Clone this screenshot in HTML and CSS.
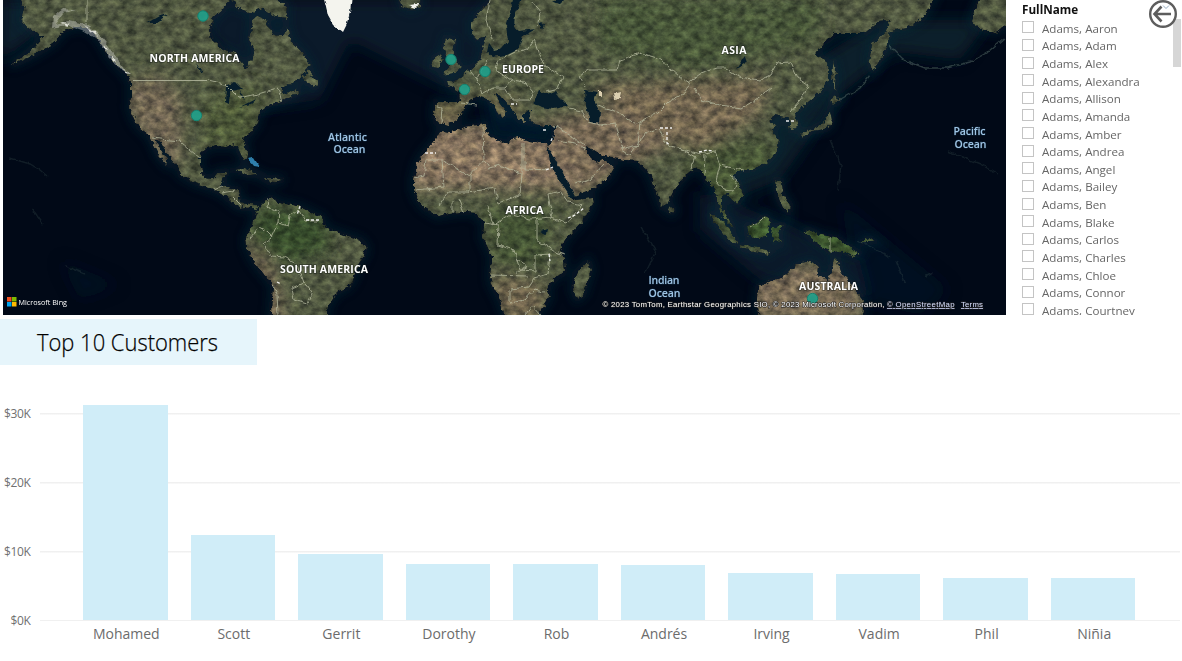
FILE: index.html
```html
<!DOCTYPE html>
<html lang="en">
<head>
<meta charset="utf-8">
<title>Customers</title>
<link rel="stylesheet" href="styles.css">
</head>
<body>
<div class="report">
  <div class="top">
    <svg class="map" viewBox="3 0 1003 315" width="1003" height="315">
      <defs>
        <filter id="land-texture" x="-10" y="-20" width="1030" height="350" filterUnits="userSpaceOnUse" color-interpolation-filters="sRGB">
          <feTurbulence type="fractalNoise" baseFrequency="0.2" numOctaves="3" seed="8" result="edge"/>
          <feDisplacementMap in="SourceGraphic" in2="edge" scale="6" xChannelSelector="R" yChannelSelector="G" result="shape"/>
          <feTurbulence type="fractalNoise" baseFrequency="0.11 0.14" numOctaves="5" seed="21"/>
          <feColorMatrix type="matrix" values="1.2 0 0 0 -0.05  1.15 0.05 0 0 -0.05  1.0 0 0.1 0 -0.02  0 0 0 0 1" result="grain"/>
          <feComposite in="shape" in2="grain" operator="arithmetic" k1="0.9" k2="0.4" k3="0" k4="0" result="mixed"/>
          <feComposite in="mixed" in2="shape" operator="in"/>
        </filter>
        <filter id="rough" x="-10" y="-20" width="1030" height="350" filterUnits="userSpaceOnUse" color-interpolation-filters="sRGB">
          <feTurbulence type="fractalNoise" baseFrequency="0.16" numOctaves="2" seed="5"/>
          <feDisplacementMap in="SourceGraphic" scale="5" xChannelSelector="R" yChannelSelector="G"/>
          <feGaussianBlur stdDeviation=".35"/>
        </filter>
        <filter id="soft8" x="-40%" y="-40%" width="180%" height="180%"><feGaussianBlur stdDeviation="8"/></filter>
        <filter id="soft4" x="-20%" y="-20%" width="140%" height="140%"><feGaussianBlur stdDeviation="5"/></filter>
        <path id="continents" d="M20 0L24 9L21 20L27 27L35 33L43 37L35 46L22 57L10 66L28 58L43 50L55 42L63 31L75 27L86 27L95 34L103 45L109 56L118 66L126 74L131 83L131 96L130 108L134 119L140 128L148 134L153 143L159 156L167 165L168 162L161 150L154 138L160 141L168 155L175 163L181 175L195 183L210 188L222 193L232 202L241 208L250 206L256 211L259 206L248 203L240 202L238 190L228 187L221 186L223 180L227 172L218 172L213 179L204 178L200 165L200 155L207 148L217 146L225 147L237 145L241 155L246 162L247 152L243 140L250 133L257 124L259 113L269 105L281 101L288 98L299 92L297 89L284 94L282 88L299 80L311 65L302 52L291 41L287 27L281 36L272 34L266 20L257 16L252 20L249 40L255 52L250 60L247 69L241 63L235 53L222 49L212 40L209 30L213 18L221 12L230 0V-12H20Z
          M232 0L240 9L252 13L262 8L274 16L286 18L287 6L278 0V-12H232ZM302 78L309 70L318 84L315 88Z
          M256 213L262 204L270 197L280 203L298 206L312 213L322 217L325 228L345 235L360 240L366 247L364 256L356 268L354 278L348 287L336 293L328 305L326 325L270 325L273 285L262 272L254 262L247 247L246 238L252 228Z
          M440 131L452 132L465 127L485 124L487 134L498 140L508 144L511 139L520 138L530 141L540 143L547 143L550 152L558 170L566 185L572 195L575 200L592 198L593 203L586 217L574 230L565 240L560 250L564 258L565 270L550 283L547 290L549 298L543 307L536 319L506 319L500 300L492 285L490 275L492 258L488 248L483 238L484 222L475 213L465 212L450 213L438 216L425 208L418 200L414 190L414 178L418 163L425 152L434 142Z
          M588 261L591 270L583 295L577 299L573 290L575 275Z
          M490 0L482 10L472 21L472 34L477 39L486 36L482 50L480 61L470 70L461 76L457 80L447 81L448 85L459 91L460 102L436 102L434 115L436 122L448 125L457 119L465 107L468 101L478 97L487 99L497 108L501 118L507 113L500 104L494 94L501 96L512 109L518 119L524 122L524 113L530 110L529 119L534 124L545 126L556 126L553 138L548 149L553 159L566 181L574 196L592 189L608 178L614 167L604 160L596 163L588 155L586 146L594 150L604 156L625 160L638 161L645 169L650 174L656 192L662 207L668 203L675 188L688 173L694 168L702 170L706 180L714 187L718 200L720 212L728 222L734 228L728 218L722 208L722 195L728 194L731 200L737 203L743 195L740 185L732 177L737 171L752 170L766 163L776 152L779 141L772 130L778 125L770 122L774 115L784 117L789 119L791 130L798 127L795 113L807 103L820 92L828 80L828 68L826 60L815 55L823 44L835 33L865 33L879 21L891 20L885 32L872 45L869 61L873 72L885 51L890 31L907 28L923 18L934 0V-12H490Z
          M980 0L974 11L971 22L982 30L996 32L1018 16V-12H980ZM446 37L455 40L453 53L461 67L455 73L443 75L450 67L446 56L443 48ZM434 58L441 54L443 60L438 68L432 67Z
          M709 213L719 218L731 230L738 244L730 242L720 229ZM739 245L754 247L771 251L768 254L744 249ZM746 226L756 224L766 215L770 223L767 237L755 238L748 234ZM776 180L781 181L782 194L790 205L789 213L781 204L777 194ZM773 227L785 225L778 231L781 243L777 239L775 244L772 236ZM804 231L811 230L820 235L835 237L848 246L860 254L854 256L843 251L830 252L820 245L811 239ZM860 242L876 242L869 238ZM669 205L675 210L671 214L668 210Z
          M761 325L757 300L758 287L770 281L782 278L790 270L800 263L812 261L818 266L817 275L828 280L832 269L834 258L838 262L842 275L852 285L860 295L864 305L863 325Z
          M834 95L841 100L833 105L830 102ZM830 110L832 121L828 128L820 130L812 131L803 137L800 133L812 129L823 123ZM833 59L836 75L835 91L832 80ZM235 170L247 168L259 174L249 175ZM263 178L275 178L284 180L270 182ZM400 0L402 6L412 10L420 6L421 -6H400Z"/>
        <clipPath id="land-clip"><use href="#continents"/></clipPath>
        <clipPath id="map-clip"><rect x="3" y="0" width="1003" height="315"/></clipPath>
      </defs>
      <g clip-path="url(#map-clip)">
        <rect x="3" y="0" width="1003" height="315" fill="#010917"/>
        <g filter="url(#soft8)" fill="#0b2635">
          <path d="M0 0H60L35 35L0 62Z" opacity=".8"/>
          <path d="M200 0H560V50L450 90L350 40L320 100L250 110L240 70L205 30Z" opacity=".6"/>
          <path d="M480 90L560 110L550 145L490 140Z" opacity=".5"/>
          <path d="M815 60L880 20H990L960 60L895 52L840 95L780 180L730 200L710 180Z" opacity=".7"/>
          <path d="M700 190L790 225L860 260L870 300L760 280L700 230Z" opacity=".6"/>
          <path d="M840 200L950 290L920 315L860 300ZM60 260L120 285L80 300Z" opacity=".3"/>
        </g>
        <use href="#continents" fill="none" stroke="#0a2a38" stroke-width="7" opacity=".6" filter="url(#soft4)"/>
        <g filter="url(#land-texture)">
          <g clip-path="url(#land-clip)">
            <rect x="-10" y="-20" width="1030" height="350" fill="#596149"/>
            <g filter="url(#soft8)">
              <path d="M120 85L160 75L182 100L180 165L160 165L130 115Z" fill="#7d715d"/>
              <path d="M205 100L260 85L250 150L205 145Z" fill="#56633f"/>
              <path d="M405 125L560 125L570 190L480 188L410 190Z" fill="#94806a"/>
              <path d="M550 120L680 95L700 130L640 160L570 200Z" fill="#857560"/>
              <path d="M590 85L770 78L760 115L700 150L640 130Z" fill="#7f715a"/>
              <path d="M260 205L325 215L330 250L285 263L250 235Z" fill="#3c5433"/>
              <path d="M245 240L270 265L285 320L265 320Z" fill="#806e5b"/>
              <path d="M485 208L550 205L545 265L495 262Z" fill="#4b5c3a"/>
              <path d="M490 275L545 285L540 320L500 320Z" fill="#7b6e57"/>
              <path d="M430 98H520V115L430 125Z" fill="#70694e"/>
              <path d="M750 265L860 265V320H750Z" fill="#857660"/>
              <path d="M690 150L780 140L760 240H700Z" fill="#4f5f3e"/>
              <path d="M800 225H870V258H810ZM740 215H790V245H740Z" fill="#415d30"/>
              <path d="M600 0H820V40L700 70L600 50Z" fill="#505e41"/>
            </g>
          </g>
        </g>
        <g fill="#071d2a" filter="url(#rough)">
          <path d="M515 -6L524 -6L515 15L514 27L519 31L536 29L523 36L518 49L506 55L493 57L487 52L489 43L494 50L502 48L508 41L506 26Z"/>
          <path d="M533 103L539 91L547 94L555 91L560 98L568 106L554 109L541 107Z"/>
          <path d="M585 90L597 92L594 101L600 112L599 124L590 122L586 106Z"/>
          <path d="M547 149L551 151L559 166L568 182L575 197L571 198L560 182L552 168Z"/>
          <path d="M226 86L235 82L242 89L230 91L229 104L225 102ZM239 90L245 100L241 98ZM240 107L257 98L250 104Z"/>
          <path d="M148 23L160 16L168 14L156 23ZM196 63L203 73L200 72ZM745 56L747 62L736 69ZM539 22L544 24L542 29ZM551 0L565 0L560 5ZM540 231L547 229L546 234Z"/>
        </g>
        <g fill="none" stroke="#b8bca1" stroke-width="1" opacity=".75" filter="url(#rough)">
          <path d="M87 -4V23M152 138L180 141L190 150L200 158M208 80L225 84L239 98L258 94L278 88L282 102M214 190L223 186M222 193L236 190M240 205L233 198"/>
          <path d="M268 198L267 207L279 211L278 223L288 226L290 216L298 209L305 221L319 221M278 223L271 238L263 244L271 256L285 257L297 265L303 283L292 288L294 300L307 304L313 295L304 282M250 238L259 227L266 231L272 237M278 315L277 295L272 283"/>
          <path d="M483 127L484 160L470 176L442 160L426 160L424 176L415 178M442 160L444 187L415 190M470 176V192L448 192L440 205M484 160L489 168L500 165L522 175V144M524 143V169L552 170M522 175L520 195L498 203L495 188L468 192M452 201V213M459 200L464 213M488 205L493 225L503 219L511 214L530 219L552 217L548 194L560 191L568 202L582 205L567 223L550 218M537 220L537 240L555 252L565 255M485 223L499 225L498 245L514 250L520 270L535 271L535 255L550 254L548 274L535 278L529 287L510 289L510 303L525 300L534 290L544 292M491 275L528 276M515 258L528 266L515 274M525 315L532 306L540 315"/>
          <path d="M437 106L442 107L441 123M460 103L477 105M470 71L477 79L487 60M477 79L482 94L493 88L505 88L512 80L506 76L495 70L497 61L514 52L528 49L534 40L539 55L545 66L563 77L558 88L546 91M505 88L513 100L530 100L533 91L525 82L512 80M490 0L486 20L493 42M532 2L541 13L538 27M585 87L580 76L588 70L617 70L620 60L641 53L660 59L680 77L690 83L685 93L668 102L658 112L635 124L620 113L598 105M688 83L700 74L717 68L726 68L740 77L760 80L770 75L777 63L790 62L797 78L808 85L804 95L790 112M694 88L702 100L720 105L742 108L755 100L772 88M569 108L582 111L588 122L600 125L616 123L622 150L630 155L646 133L659 128L667 145L700 154L715 151L720 165L733 168L743 170M554 125L585 145M557 140L575 143L585 149M575 184L590 180L603 165M620 149L638 145L640 122M680 148L695 157L691 168M705 155L704 175M720 165L716 181L724 190L734 191L737 181L730 175M750 227L760 221L764 217M830 237V252"/>
        </g>
        <path d="M133 80.500H207" fill="none" stroke="#b8bca1" stroke-width="1" opacity=".8"/>
        <g fill="none" stroke="#566d66" stroke-width="1.4" opacity=".5" filter="url(#rough)">
          <path d="M889 45L904 60L925 68L947 68L970 62L988 52L1004 38M841 99L860 88L870 75"/>
          <path d="M10 158L30 164L40 170L48 177M948 151L980 164L998 174M830 140L841 165L838 190M857 240L883 253L890 258M896 260L905 282M925 277L933 273M640 226L656 251L645 274M32 209L43 224M65 266L85 274" opacity=".4"/>
        </g>
        <g fill="#f4f4ee" filter="url(#rough)">
          <path d="M323 -6L328 15L333 24L343 32L347 24L350 12L352 -6Z"/>
          <path d="M53 16L62 9L78 10L63 13L55 24L68 21L86 24L96 31L106 43L114 54L124 69L131 74L121 70L109 57L97 39L82 30L67 25L52 28Z" opacity=".35"/>
          <path d="M62 22L70 24L66 26ZM84 25L95 32L98 37L90 31ZM104 44L108 50L105 49ZM110 55L116 60L114 62ZM122 69L131 74L125 73Z" opacity=".8"/>
          <path d="M408 5L419 4L416 8Z"/>
          <path d="M599 91H602V97L599 96ZM613 94L621 92L620 98L614 99Z" fill="#dccfb0"/>
        </g>
        <path d="M248 159L254 158L259 166L253 165ZM252 154L257 158" fill="#2f7fac" filter="url(#rough)"/>
        <path d="M425 153H436M543 130H547M551 141L553 136M546 170L553 167M568 218L575 215L584 208M699 152L707 150L713 151M660 128H672M667 132V143L670 145M786 121H795M300 206L297 215M306 220H320M549 254L550 261M511 104H517M277 282L281 284" fill="none" stroke="#fff" stroke-width="1.3" stroke-dasharray="3 2" opacity=".9"/>
        <g class="pins"><circle cx="203" cy="16" r="5.2"/><circle cx="196.500" cy="115.500" r="5.2"/><circle cx="451" cy="59.500" r="5.2"/><circle cx="485" cy="71.500" r="5.2"/><circle cx="464.500" cy="89.500" r="5.2"/><circle cx="812.500" cy="298.500" r="5.2"/></g>
        <g class="continent-label">
          <text x="149.500" y="62" textLength="90">NORTH AMERICA</text>
          <text x="502" y="73" textLength="42">EUROPE</text>
          <text x="721.500" y="54" textLength="25">ASIA</text>
          <text x="505.500" y="214" textLength="38">AFRICA</text>
          <text x="280" y="273" textLength="88">SOUTH AMERICA</text>
          <text x="799" y="290" textLength="59">AUSTRALIA</text>
        </g>
        <g class="ocean-label">
          <text x="328" y="141" textLength="39">Atlantic</text><text x="333.500" y="153" textLength="32">Ocean</text>
          <text x="953.500" y="135" textLength="32">Pacific</text><text x="954.500" y="148" textLength="32">Ocean</text>
          <text x="648.500" y="284" textLength="31">Indian</text><text x="648.500" y="296.500" textLength="32">Ocean</text>
        </g>
        <path d="M7 297h4.500v4.500H7z" fill="#f25022"/><path d="M12 297h4.500v4.500H12z" fill="#7fba00"/><path d="M7 302h4.500v4.500H7z" fill="#00a4ef"/><path d="M12 302h4.500v4.500H12z" fill="#ffb900"/>
        <text class="bing" x="18.500" y="304.500" textLength="48.500" lengthAdjust="spacingAndGlyphs">Microsoft Bing</text>
        <g class="credits">
          <text x="602.500" y="307" textLength="282">© 2023 TomTom, Earthstar Geographics SIO, © 2023 Microsoft Corporation,</text>
          <text class="credit-link" x="887" y="307" textLength="67.500">© OpenStreetMap</text>
          <text class="credit-link" x="961" y="307" textLength="22">Terms</text>
        </g>
      </g>
    </svg>
    <div class="slicer">
      <div class="slicer-title">FullName</div>
      <ul class="names">
        <li><i class="box"></i>Adams, Aaron</li>
        <li><i class="box"></i>Adams, Adam</li>
        <li><i class="box"></i>Adams, Alex</li>
        <li><i class="box"></i>Adams, Alexandra</li>
        <li><i class="box"></i>Adams, Allison</li>
        <li><i class="box"></i>Adams, Amanda</li>
        <li><i class="box"></i>Adams, Amber</li>
        <li><i class="box"></i>Adams, Andrea</li>
        <li><i class="box"></i>Adams, Angel</li>
        <li><i class="box"></i>Adams, Bailey</li>
        <li><i class="box"></i>Adams, Ben</li>
        <li><i class="box"></i>Adams, Blake</li>
        <li><i class="box"></i>Adams, Carlos</li>
        <li><i class="box"></i>Adams, Charles</li>
        <li><i class="box"></i>Adams, Chloe</li>
        <li><i class="box"></i>Adams, Connor</li>
        <li><i class="box"></i>Adams, Courtney</li>
      </ul>
      <div class="thumb"></div>
      <svg class="back" width="30" height="30" viewBox="0 0 30 30">
        <circle cx="15" cy="14" r="12.800" fill="none" stroke="#5d5d5d" stroke-width="2.400"/>
        <path d="M15 5.500l3 3 3-3" fill="none" stroke="#92a9bd" stroke-width="1"/>
        <path d="M23 14H7M13.500 6.500L6.500 14l7 7.500" fill="none" stroke="#5d5d5d" stroke-width="2.600"/>
      </svg>
    </div>
  </div>
  <div class="heading"><svg width="257" height="46"><text x="37" y="32" textLength="181" lengthAdjust="spacingAndGlyphs">Top 10 Customers</text></svg></div>
  <div class="chart">
    <div class="axis"><span>$30K</span><span>$20K</span><span>$10K</span><span>$0K</span></div>
    <div class="plot">
      <div class="bars">
        <div class="bar" style="height:215.500px"></div>
        <div class="bar" style="height:85.500px"></div>
        <div class="bar" style="height:66.500px"></div>
        <div class="bar" style="height:56.500px"></div>
        <div class="bar" style="height:56px"></div>
        <div class="bar" style="height:55.500px"></div>
        <div class="bar" style="height:47px"></div>
        <div class="bar" style="height:46.500px"></div>
        <div class="bar" style="height:42.500px"></div>
        <div class="bar" style="height:42px"></div>
      </div>
      <div class="labels"><span>Mohamed</span><span>Scott</span><span>Gerrit</span><span>Dorothy</span><span>Rob</span><span>Andrés</span><span>Irving</span><span>Vadim</span><span>Phil</span><span>Niñia</span></div>
    </div>
  </div>
</div>
</body>
</html>
```
FILE: styles.css
```css
* { box-sizing: border-box; }
body {
  margin: 0;
  background: #fff;
  font-family: "Open Sans", "Noto Sans", sans-serif;
  overflow: hidden;
}
.report { width: 1182px; height: 661px; }
.top { display: flex; height: 315px; padding-left: 3px; }
.map { display: block; flex: none; }
.pins circle { fill: #21a08a; fill-opacity: .92; stroke: #158371; stroke-width: 1; }
.continent-label { font-size: 10.500px; font-weight: 700; fill: #fff; paint-order: stroke; stroke: rgba(20, 25, 20, .5); stroke-width: 1.500px; }
.ocean-label { font-size: 10.500px; font-weight: 600; fill: #9fc4e4; paint-order: stroke; stroke: #12283c; stroke-width: 1px; }
.bing { font-size: 7.500px; fill: #fff; }
.credits { font-family: "Liberation Sans", sans-serif; font-size: 7.800px; fill: #fff; paint-order: stroke; stroke: #222; stroke-width: 1px; }
.credit-link { fill: #d3dcff; text-decoration: underline; }

.slicer { position: relative; width: 176px; height: 315px; padding-left: 16px; overflow: hidden; }
.slicer-title { height: 20px; font-size: 11.700px; line-height: 18.500px; font-weight: 700; color: #111; }
.names { margin: 0; padding: 0; list-style: none; }
.names li { display: flex; align-items: center; gap: 8px; height: 17.640px; font-size: 11.600px; line-height: 17px; padding-bottom: 1px; color: #666; white-space: nowrap; }
.box { width: 12px; height: 12px; margin-top: -2px; border: 1px solid #c4c4c4; }
.thumb { position: absolute; right: 1px; top: 19px; width: 8px; height: 48px; background: #d6d6d6; }
.back { position: absolute; left: 142px; top: 0; }

.heading { width: 257px; height: 46px; margin-top: 4px; background: #e6f5fb; }
.heading svg { display: block; }
.heading text { font-size: 24.500px; font-weight: 300; fill: #000; stroke: #000; stroke-width: .25px; }

.chart { display: flex; height: 300px; padding-top: 39px; }
.axis { display: flex; flex-direction: column; width: 40px; padding-right: 9.500px; text-align: right; }
.axis span { flex: none; height: 69px; line-height: 19px; font-size: 12px; letter-spacing: -.35px; color: #707070; }
.plot { width: 1140px; }
.bars {
  display: grid;
  grid-template-columns: repeat(10, 107.550px);
  justify-items: center;
  align-items: end;
  height: 217px;
  padding-left: 31.500px;
  background:
    linear-gradient(#f0f0f0, #f0f0f0) 0 9px / 100% 1.500px no-repeat,
    linear-gradient(#f0f0f0, #f0f0f0) 0 78px / 100% 1.500px no-repeat,
    linear-gradient(#f0f0f0, #f0f0f0) 0 147px / 100% 1.500px no-repeat,
    linear-gradient(#f0f0f0, #f0f0f0) 0 216px / 100% 1.500px no-repeat;
}
.bar { width: 84.500px; background: #d0edf8; margin-bottom: 1px; }
.labels {
  display: grid;
  grid-template-columns: repeat(10, 107.550px);
  padding: 3px 0 0 32.500px;
  text-align: center;
  font-size: 14px;
  line-height: 20px;
  color: #6c6c6c;
}
```
